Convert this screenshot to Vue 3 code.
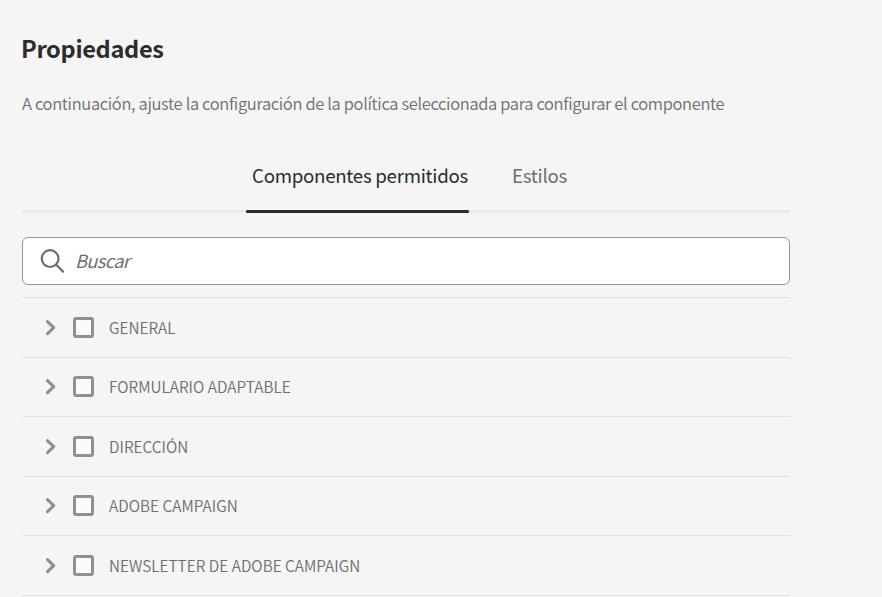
<script setup>
const tabs = [
  { id: 'allowed', label: 'Componentes permitidos', active: true },
  { id: 'styles', label: 'Estilos', active: false },
]
const groups = ['GENERAL', 'FORMULARIO ADAPTABLE', 'DIRECCIÓN', 'ADOBE CAMPAIGN', 'NEWSLETTER DE ADOBE CAMPAIGN']
</script>

<template>
  <main class="panel">
    <h1 class="title"><span>Propiedades</span></h1>
    <p class="description"><span>A continuación, ajuste la configuración de la política seleccionada para configurar el componente</span></p>
    <nav class="tabs">
      <a v-for="tab in tabs" :key="tab.id" class="tab" :class="[tab.id, { active: tab.active }]"><span>{{ tab.label }}</span></a>
    </nav>
    <label class="search">
      <svg class="search-icon" width="26" height="26" viewBox="0 0 26 26" fill="none">
        <circle cx="10.1" cy="10.6" r="8.4" />
        <path d="M16.2 16.7 L23.1 23.6" />
      </svg>
      <input class="search-input" type="text" placeholder="Buscar" />
    </label>
    <ul class="groups">
      <li v-for="group in groups" :key="group" class="group">
        <svg class="chevron" width="10" height="16" viewBox="0 0 10 16" fill="none">
          <path d="M1.5 1.6 L7.7 7.6 L1.5 13.6" />
        </svg>
        <span class="checkbox"></span>
        <span class="group-label">{{ group }}</span>
      </li>
    </ul>
  </main>
</template>

<style>
body {
  background: #f5f5f5;
  overflow: hidden;
}
</style>

<style scoped>
.panel {
  box-sizing: border-box;
  width: 882px;
  height: 597px;
  padding: 28px 92px 0 22px;
  overflow: hidden;
  background: #f5f5f5;
  color: #6e6e6e;
  font-family: "Noto Sans CJK SC", "Open Sans", sans-serif;
}
.title {
  margin: 0 0 0 -1px;
  height: 40px;
  line-height: 40px;
  font-size: 23.6px;
  font-weight: 700;
  letter-spacing: -0.33px;
  color: #2c2c2c;
}
.description {
  margin: 20px 0 0;
  height: 30px;
  line-height: 30px;
  font-size: 16.5px;
  font-weight: 350;
  letter-spacing: -0.34px;
  white-space: nowrap;
}
.tabs {
  display: flex;
  box-sizing: border-box;
  height: 61px;
  margin: 34px 0 24px;
  padding-left: 224px;
  border-bottom: 3px solid #eaeaea;
}
.tab {
  box-sizing: border-box;
  height: 61px;
  line-height: 46px;
  font-size: 18.7px;
  letter-spacing: -0.28px;
  white-space: nowrap;
}
.tab.active {
  width: 223px;
  padding-left: 6px;
  margin-right: 43px;
  color: #2c2c2c;
  position: relative;
}
.tab.active::after {
  content: "";
  position: absolute;
  left: 0;
  right: 0;
  bottom: 0;
  height: 3px;
  border-radius: 1px;
  background: #2c2c2c;
}
.search {
  display: flex;
  align-items: center;
  box-sizing: border-box;
  height: 48px;
  padding-left: 17px;
  border: 1px solid #959595;
  border-radius: 6px;
  background: #fff;
}
.search-icon {
  flex: none;
  stroke: #6e6e6e;
  stroke-width: 2.2;
  stroke-linecap: round;
}
.search-input {
  flex: 1;
  height: 40px;
  margin: 0 0 2px 9px;
  padding: 0;
  border: 0;
  outline: 0;
  background: none;
  font: italic 18.2px "Noto Sans CJK SC", "Open Sans", sans-serif;
  letter-spacing: -0.6px;
}
.search-input::placeholder {
  color: #6e6e6e;
  opacity: 1;
}
.groups {
  margin: 12px 0 0;
  padding: 0;
  list-style: none;
}
.group {
  display: flex;
  align-items: flex-start;
  box-sizing: border-box;
  height: 60px;
  padding: 19px 0 0 24px;
  border-top: 1px solid #e1e1e1;
}
.group:nth-child(even) {
  height: 59px;
  padding-top: 18px;
}
.group:last-child {
  height: 61px;
  border-bottom: 1px solid #e1e1e1;
}
.chevron {
  flex: none;
  margin-top: 3px;
  stroke: #8e8e8e;
  stroke-width: 3;
  stroke-linecap: round;
  stroke-linejoin: round;
}
.checkbox {
  flex: none;
  box-sizing: border-box;
  width: 21px;
  height: 21px;
  margin-left: 17px;
  border: 3px solid #909090;
  border-radius: 3px;
  background: #fafafa;
}
.group-label {
  height: 20px;
  margin-left: 15px;
  line-height: 20px;
  font-size: 15.3px;
  font-weight: 350;
  letter-spacing: 0.03px;
}
</style>
